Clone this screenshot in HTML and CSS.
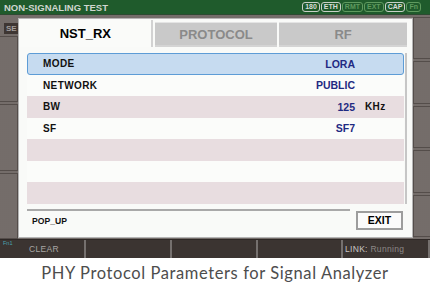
FILE: index.html
```html
<!DOCTYPE html>
<html lang="en">
<head>
  <meta charset="UTF-8" />
  <title>Non-Signaling Test – NST_RX</title>
  <link rel="stylesheet" href="styles.css">
</head>
<body>
  <div class="screen">
    <!-- title bar with status flags -->
    <header class="titlebar">
      <span class="title">NON-SIGNALING TEST</span>
      <div class="flags">
        <span class="flag on">180</span>
        <span class="flag on">ETH</span>
        <span class="flag">RMT</span>
        <span class="flag">EXT</span>
        <span class="flag on">CAP</span>
        <span class="flag">Fn</span>
      </div>
    </header>

    <div class="stage">
      <div class="side left">
        <div class="side-tab">SE</div>
        <div class="slot"></div>
        <div class="slot"></div>
        <div class="slot"></div>
      </div>

      <!-- popup dialog -->
      <div class="dialog">
        <div class="tabs">
          <div class="tab active">NST_RX</div>
          <div class="tab">PROTOCOL</div>
          <div class="tab">RF</div>
        </div>
        <div class="panel">
          <div class="rows">
            <div class="row selected"><span class="label">MODE</span><span class="value">LORA</span><span class="unit"></span></div>
            <div class="row"><span class="label">NETWORK</span><span class="value">PUBLIC</span><span class="unit"></span></div>
            <div class="row"><span class="label">BW</span><span class="value">125</span><span class="unit">KHz</span></div>
            <div class="row"><span class="label">SF</span><span class="value">SF7</span><span class="unit"></span></div>
            <div class="row"></div>
            <div class="row"></div>
            <div class="row"></div>
          </div>
          <div class="footer">
            <div class="popup">POP_UP</div>
            <button class="exit">EXIT</button>
          </div>
        </div>
      </div>

      <div class="side right">
        <div class="slot"></div>
        <div class="slot"></div>
        <div class="slot"></div>
        <div class="slot"></div>
        <div class="slot"></div>
      </div>
    </div>

    <!-- soft keys -->
    <footer class="softkeys">
      <div class="key first"><span class="fn">Fn1</span>CLEAR</div>
      <div class="key"></div>
      <div class="key"></div>
      <div class="key"></div>
      <div class="key link"><span class="link-label">LINK:</span> Running</div>
    </footer>
  </div>

  <p class="caption">PHY Protocol Parameters for Signal Analyzer</p>
</body>
</html>
```

FILE: styles.css
```css
body {
  margin: 0;
  background: #fff;
  font-family: "Liberation Sans", Arial, sans-serif;
}
.screen {
  width: 430px;
  height: 258px;
  display: flex;
  flex-direction: column;
  background: #6b6462;
}
.titlebar {
  height: 14px;
  flex: none;
  display: flex;
  align-items: center;
  justify-content: space-between;
  padding: 0 9px 0 4px;
  background: #1f5b2c;
  border-bottom: 1px solid #2d4a32;
}
.title {
  color: #cfd6cf;
  font-size: 9.5px;
  font-weight: bold;
}
.flags {
  display: flex;
  gap: 1px;
}
.flag {
  height: 8px;
  line-height: 8px;
  padding: 0 2px;
  border: 1px solid #5f9a5f;
  border-radius: 3px;
  font-size: 7px;
  font-weight: bold;
  color: #5f9a5f;
}
.flag.on {
  color: #d7ddd7;
  border-color: #c8d0c8;
}
.stage {
  flex: 1;
  display: grid;
  grid-template-columns: 18px 395px 17px;
  background-color: #6d6663;
  background-image: radial-gradient(#7b7472 0.6px, transparent 0.8px);
  background-size: 2px 2px;
}
.side {
  display: flex;
  flex-direction: column;
  gap: 2px;
  padding-top: 3px;
}
.side .slot {
  flex: 1;
  border: 1px solid #544d4a;
}
.side.left .slot {
  border-left: none;
}
.side.right {
  padding-top: 2px;
  padding-bottom: 2px;
}
.side.right .slot {
  border-right: none;
}
.side-tab {
  margin: 5px 0 0 4px;
  height: 11px;
  line-height: 11px;
  background: #3e3633;
  color: #a39e9c;
  font-size: 8px;
  font-weight: bold;
  padding-left: 2px;
  overflow: hidden;
}
.dialog {
  margin: 3px 0 1px;
  border: 1px solid #b5b5b5;
  background: #f9faf8;
  padding: 1px;
  display: flex;
  flex-direction: column;
}
.tabs {
  display: flex;
  height: 27px;
  flex: none;
  gap: 2px;
}
.tab {
  display: flex;
  align-items: center;
  justify-content: center;
  font-size: 13px;
  font-weight: bold;
  color: #8a8a8a;
  background: #c9c9c9;
  margin-top: 2px;
  width: 123px;
  border-top: 1px solid #e4e4e4;
  border-bottom: 2px solid #d4d4d4;
}
.tab:last-child {
  width: 128px;
  margin-right: 4px;
}
.tab.active {
  width: 131px;
  margin-top: 0;
  background: #fafbf9;
  color: #000;
  border: none;
  border-right: 2px solid #d2d2d2;
}
.panel {
  flex: 1;
  display: flex;
  flex-direction: column;
  padding: 6px 4px 0 7px;
}
.rows {
  display: flex;
  flex-direction: column;
  padding-right: 1px;
  border-right: 2px solid #c6c6c6;
}
.row {
  height: 21.5px;
  box-sizing: border-box;
  display: flex;
  align-items: center;
  background: #fbfcfa;
  font-size: 10px;
  font-weight: bold;
}
.row:nth-child(odd) {
  background: #e8dde0;
}
.row.selected {
  background: #c6dbf0;
  border: 1px solid #5d9cd6;
  border-radius: 3px;
}
.label {
  flex: 1;
  padding-left: 16px;
  color: #111;
  letter-spacing: 0.4px;
}
.value {
  color: #1f2a82;
  font-size: 10.5px;
}
.unit {
  width: 39px;
  margin-left: 10px;
  color: #111;
  letter-spacing: 0.4px;
}
.row.selected .label {
  padding-left: 15px;
}
.row.selected .unit {
  width: 38px;
}
.footer {
  display: flex;
  align-items: flex-start;
  margin-top: 5px;
}
.popup {
  flex: none;
  width: 323px;
  border-top: 2px solid #a9a9a9;
  padding: 5px 0 0 5px;
  box-sizing: border-box;
  font-size: 8.6px;
  font-weight: bold;
  color: #111;
}
.exit {
  margin: 2px 0 0 6px;
  width: 47px;
  height: 19px;
  padding: 0;
  background: #fbfbfb;
  border: 2px solid #9d9d9d;
  font-family: inherit;
  font-size: 10.5px;
  font-weight: bold;
  color: #000;
}
.softkeys {
  height: 18px;
  flex: none;
  display: grid;
  grid-template-columns: 86px 86px 86px 85px 87px;
  background: #3b3431;
  border-top: 1px solid #2e2826;
}
.key {
  position: relative;
  border-right: 2px solid #75706e;
  display: flex;
  align-items: center;
  font-size: 8.5px;
  color: #a9a6a4;
  letter-spacing: 0.3px;
}
.key.first {
  padding-left: 29px;
}
.key.link {
  padding-left: 2px;
  white-space: pre;
  color: #8c8886;
}
.link-label {
  color: #c9c6c4;
}
.fn {
  position: absolute;
  left: 3px;
  top: 0;
  font-size: 5.5px;
  color: #4aa3b0;
  letter-spacing: 0;
}
.caption {
  margin: 0;
  height: 26px;
  line-height: 30px;
  text-align: center;
  font-family: Lato, "Open Sans", sans-serif;
  font-size: 16.5px;
  letter-spacing: 0.6px;
  color: #4d4d4d;
}
```
